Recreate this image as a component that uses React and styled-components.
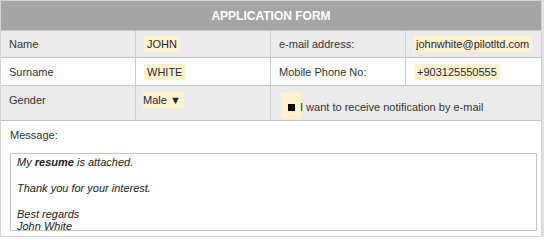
import React from 'react';
import styled, { createGlobalStyle } from 'styled-components';

const GlobalStyle = createGlobalStyle`
    body {
        margin: 0;
        background: #ffffff;
        font-family: "Liberation Sans", Arial, sans-serif;
    }
`;

const Form = styled.div`
    width: 540px;
    border: 1px solid #d4d4d4;
    box-shadow: 2px 0 0 #e2e2e2;
    background: #ffffff;
`;

const Header = styled.div`
    height: 29px;
    background: #a5a5a5;
    color: #ffffff;
    font-size: 12px;
    font-weight: bold;
    display: flex;
    align-items: center;
    justify-content: center;
    border-bottom: 1px solid #c8c8c8;
`;

const Grid = styled.div`
    display: grid;
    grid-template-columns: 135px 135px 135px 135px;
`;

const Cell = styled.div`
    height: ${(p) => p.$h}px;
    background: ${(p) => (p.$shade ? '#ebebeb' : '#ffffff')};
    grid-column: span ${(p) => p.$span || 1};
    border-right: ${(p) => (p.$last ? 'none' : '1px solid #cdcdcd')};
    border-bottom: 1px solid #c4c4c4;
    display: flex;
    align-items: ${(p) => (p.$top ? 'flex-start' : 'center')};
    padding: ${(p) => (p.$top ? '8px' : '0')} 0 0 8px;
    box-sizing: border-box;
    font-size: 11px;
    color: #333333;
`;

const Value = styled.span`
    background: #fff2cc;
    padding: 2px 3px;
    color: #2b2440;
    font-size: 11px;
    margin-left: ${(p) => p.$ml || 0}px;
`;

const Select = styled.span`
    background: #fff2cc;
    padding: 2px 3px 2px 0;
    color: #2b2440;
    font-size: 11px;
    margin-left: -1px;
    margin-top: -2px;
`;

const CheckRow = styled.div`
    display: flex;
    align-items: center;
    margin-left: 2px;
    margin-top: -1px;
`;

const CheckBox = styled.span`
    width: 20px;
    height: 26px;
    background: #fff2cc;
    display: flex;
    align-items: center;
    justify-content: center;
    margin-right: -1px;
    &::before {
        content: '';
        width: 7px;
        height: 7px;
        background: #000000;
        display: block;
        margin-top: 2px;
    }
`;

const CheckLabel = styled.span`
    font-size: 11px;
    color: #333333;
    margin-top: 1px;
`;

const MessageSection = styled.div`
    padding: 8px 4px 5px 9px;
    font-size: 11px;
    color: #333333;
`;

const MessageLabel = styled.div`
    margin-bottom: 12px;
`;

const MessageBox = styled.div`
    width: 527px;
    height: 78px;
    box-sizing: border-box;
    border: 1px solid #c5c5c5;
    padding: 2px 6px;
    font-style: italic;
    font-size: 11px;
    line-height: 12px;
    color: #222222;
`;

const Para = styled.p`
    margin: 0 0 14px 0;
    &:last-child {
        margin-bottom: 0;
    }
`;

const App = () => {
    return (
        <>
            <GlobalStyle />
            <Form>
                <Header>APPLICATION FORM</Header>
                <Grid>
                    <Cell $h={27} $shade>Name</Cell>
                    <Cell $h={27} $shade><Value>JOHN</Value></Cell>
                    <Cell $h={27} $shade>e-mail address:</Cell>
                    <Cell $h={27} $shade $last><Value $ml={-1}>johnwhite@pilotltd.com</Value></Cell>

                    <Cell $h={28}>Surname</Cell>
                    <Cell $h={28}><Value>WHITE</Value></Cell>
                    <Cell $h={28}>Mobile Phone No:</Cell>
                    <Cell $h={28} $last><Value>+903125550555</Value></Cell>

                    <Cell $h={35} $shade $top>Gender</Cell>
                    <Cell $h={35} $shade $top><Select>Male ▼</Select></Cell>
                    <Cell $h={35} $shade $span={2} $last $top>
                        <CheckRow>
                            <CheckBox />
                            <CheckLabel>I want to receive notification by e-mail</CheckLabel>
                        </CheckRow>
                    </Cell>
                </Grid>
                <MessageSection>
                    <MessageLabel>Message:</MessageLabel>
                    <MessageBox>
                        <Para>My <b>resume</b> is attached.</Para>
                        <Para>Thank you for your interest.</Para>
                        <Para>Best regards<br />John White</Para>
                    </MessageBox>
                </MessageSection>
            </Form>
        </>
    );
};

export default App;
